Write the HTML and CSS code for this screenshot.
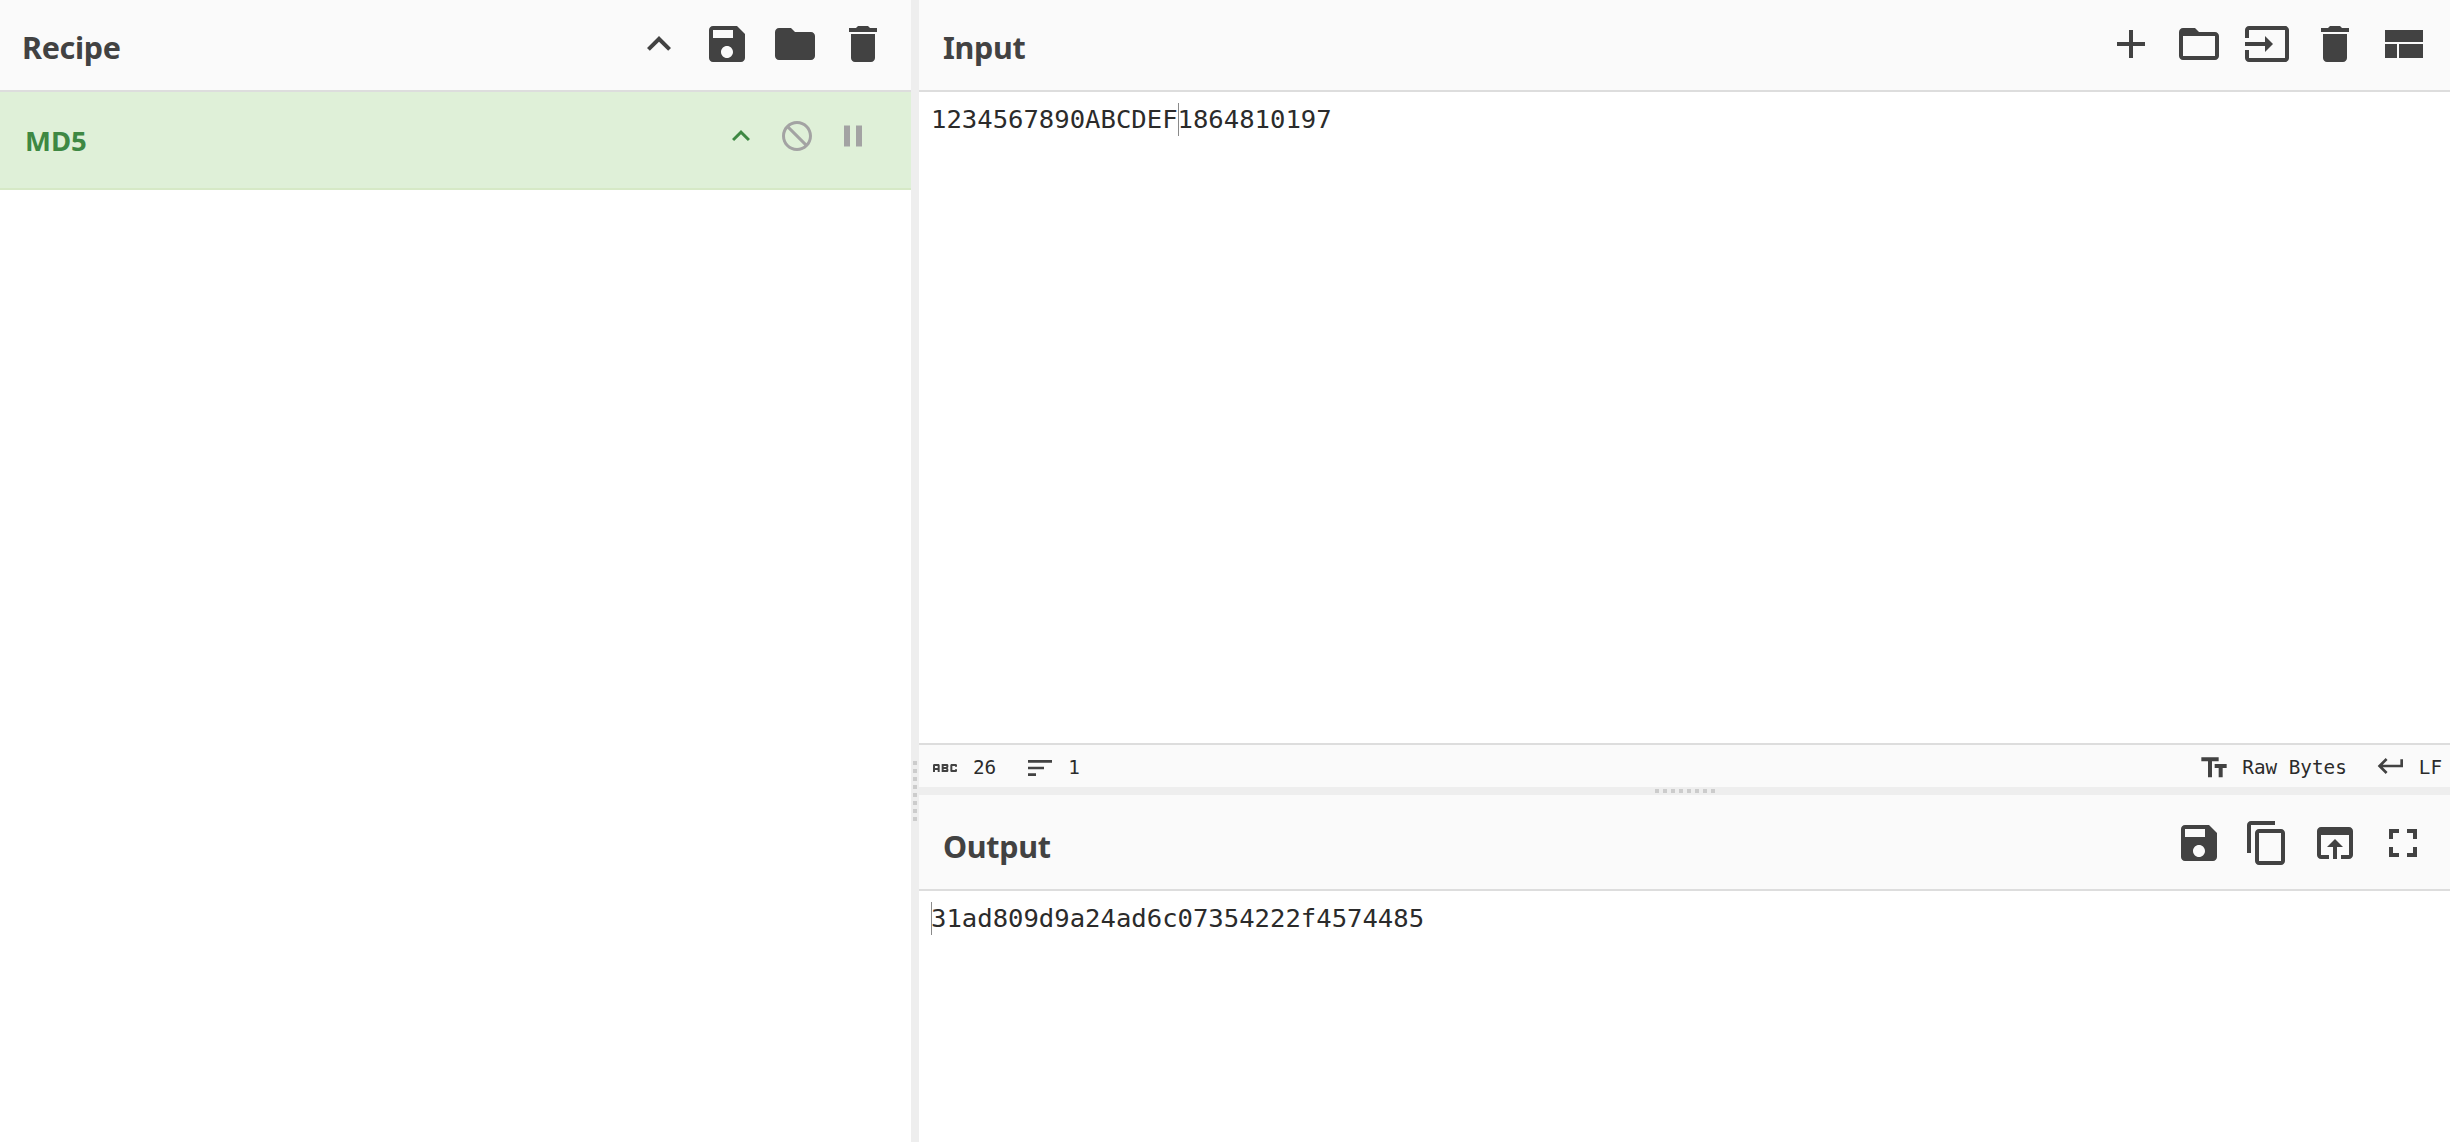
FILE: index.html
```html
<!DOCTYPE html>
<html lang="en">
<head>
<meta charset="utf-8">
<title>CyberChef</title>
<link rel="stylesheet" href="styles.css">
</head>
<body>
<div class="app">
  <section class="recipe">
    <header class="bar bar-recipe">
      <h1 class="title">Recipe</h1>
      <div class="tools">
        <svg class="ico" viewBox="0 0 24 24"><path d="M7.41 15.41L12 10.83l4.59 4.58L18 14l-6-6-6 6z"/></svg>
        <svg class="ico" viewBox="0 0 24 24"><path d="M17 3H5c-1.11 0-2 .9-2 2v14c0 1.1.89 2 2 2h14c1.1 0 2-.9 2-2V7l-4-4zm-5 16c-1.66 0-3-1.34-3-3s1.34-3 3-3 3 1.34 3 3-1.34 3-3 3zm3-10H5V5h10v4z"/></svg>
        <svg class="ico" viewBox="0 0 24 24"><path d="M10 4H4c-1.1 0-1.99.9-1.99 2L2 18c0 1.1.9 2 2 2h16c1.1 0 2-.9 2-2V8c0-1.1-.9-2-2-2h-8l-2-2z"/></svg>
        <svg class="ico" viewBox="0 0 24 24"><path d="M6 19c0 1.1.9 2 2 2h8c1.1 0 2-.9 2-2V7H6v12zM19 4h-3.5l-1-1h-5l-1 1H5v2h14V4z"/></svg>
      </div>
    </header>
    <div class="op">
      <span class="op-name">MD5</span>
      <div class="op-tools">
        <svg class="ico-sm ico-green" viewBox="0 0 24 24"><path d="M7.41 15.41L12 10.83l4.59 4.58L18 14l-6-6-6 6z"/></svg>
        <svg class="ico-sm ico-grey" viewBox="0 0 24 24"><path d="M12 2C6.48 2 2 6.48 2 12s4.48 10 10 10 10-4.48 10-10S17.52 2 12 2zm0 18c-4.42 0-8-3.58-8-8 0-1.85.63-3.55 1.69-4.9L16.9 18.31C15.55 19.37 13.85 20 12 20zm6.31-3.1L7.1 5.69C8.45 4.63 10.15 4 12 4c4.42 0 8 3.58 8 8 0 1.85-.63 3.55-1.69 4.9z"/></svg>
        <svg class="ico-sm ico-grey" viewBox="0 0 24 24"><path d="M6 19h4V5H6v14zm8-14v14h4V5h-4z"/></svg>
      </div>
    </div>
  </section>
  <div class="gutter-v"><div class="dots-v"></div></div>
  <section class="io">
    <header class="bar">
      <h1 class="title">Input</h1>
      <div class="tools">
        <svg class="ico" viewBox="0 0 24 24"><path d="M19 13h-6v6h-2v-6H5v-2h6V5h2v6h6v2z"/></svg>
        <svg class="ico" viewBox="0 0 24 24"><path d="M20 6h-8l-2-2H4c-1.1 0-1.99.9-1.99 2L2 18c0 1.1.9 2 2 2h16c1.1 0 2-.9 2-2V8c0-1.1-.9-2-2-2zm0 12H4V8h16v10z"/></svg>
        <svg class="ico" viewBox="0 0 24 24"><path d="M21 3.01H3c-1.1 0-2 .9-2 2V9h2V4.99h18v14.03H3V15H1v4.01c0 1.1.9 1.98 2 1.98h18c1.1 0 2-.88 2-1.98v-14c0-1.11-.9-2-2-2zM11 16l4-4-4-4v3H1v2h10v3z"/></svg>
        <svg class="ico" viewBox="0 0 24 24"><path d="M6 19c0 1.1.9 2 2 2h8c1.1 0 2-.9 2-2V7H6v12zM19 4h-3.5l-1-1h-5l-1 1H5v2h14V4z"/></svg>
        <svg class="ico" viewBox="0 0 24 24"><path d="M3 19h6v-7H3v7zm7 0h12v-7H10v7zM3 5v6h19V5H3z"/></svg>
      </div>
    </header>
    <div class="text text-input">1234567890ABCDEF<span class="caret"></span>1864810197</div>
    <footer class="status">
      <div class="status-group">
        <svg class="ico-st" viewBox="0 0 24 24"><path d="M21 11h-1.5v-.5h-2v3h2V13H21v1c0 .55-.45 1-1 1h-3c-.55 0-1-.45-1-1v-4c0-.55.45-1 1-1h3c.55 0 1 .45 1 1v1zM8 10v5H6.5v-1.5h-2V15H3v-5c0-.55.45-1 1-1h3c.55 0 1 .45 1 1zm-1.5.5h-2V12h2v-1.5zm7 1.5c.55 0 1 .45 1 1v1c0 .55-.45 1-1 1h-4V9h4c.55 0 1 .45 1 1v1c0 .55-.45 1-1 1zM11 10.5v.75h2v-.75h-2zm2 3v-.75h-2v.75h2z"/></svg>
        <span class="st-text">26</span>
        <svg class="ico-st st-next" viewBox="0 0 24 24"><path d="M3 18h6v-2H3v2zM3 6v2h18V6H3zm0 7h12v-2H3v2z"/></svg>
        <span class="st-text">1</span>
      </div>
      <div class="status-group">
        <svg class="ico-st" viewBox="0 0 24 24"><path d="M2.5 4v3h5v12h3V7h5V4h-13zm19 5h-9v3h3v7h3v-7h3V9z"/></svg>
        <span class="st-text">Raw Bytes</span>
        <svg class="ico-st st-next st-return" viewBox="0 0 24 24"><path d="M19 7v4H5.83l3.58-3.59L8 6l-6 6 6 6 1.41-1.41L5.83 13H21V7z"/></svg>
        <span class="st-text">LF</span>
      </div>
    </footer>
    <div class="gutter-h"><div class="dots-h"></div></div>
    <header class="bar bar-output">
      <h1 class="title">Output</h1>
      <div class="tools">
        <svg class="ico" viewBox="0 0 24 24"><path d="M17 3H5c-1.11 0-2 .9-2 2v14c0 1.1.89 2 2 2h14c1.1 0 2-.9 2-2V7l-4-4zm-5 16c-1.66 0-3-1.34-3-3s1.34-3 3-3 3 1.34 3 3-1.34 3-3 3zm3-10H5V5h10v4z"/></svg>
        <svg class="ico" viewBox="0 0 24 24"><path d="M16 1H4c-1.1 0-2 .9-2 2v14h2V3h12V1zm3 4H8c-1.1 0-2 .9-2 2v14c0 1.1.9 2 2 2h11c1.1 0 2-.9 2-2V7c0-1.1-.9-2-2-2zm0 16H8V7h11v14z"/></svg>
        <svg class="ico" viewBox="0 0 24 24"><path d="M19 4H5c-1.11 0-2 .9-2 2v12c0 1.1.89 2 2 2h4v-2H5V8h14v10h-4v2h4c1.1 0 2-.9 2-2V6c0-1.1-.9-2-2-2zm-7 6l-4 4h3v6h2v-6h3l-4-4z"/></svg>
        <svg class="ico" viewBox="0 0 24 24"><path d="M7 14H5v5h5v-2H7v-3zm-2-4h2V7h3V5H5v5zm12 7h-3v2h5v-5h-2v3zM14 5v2h3v3h2V5h-5z"/></svg>
      </div>
    </header>
    <div class="text text-output"><span class="caret"></span>31ad809d9a24ad6c07354222f4574485</div>
  </section>
</div>
</body>
</html>
```

FILE: styles.css
```css
* { box-sizing: border-box; }
html, body { margin: 0; height: 100%; background: #fff; overflow: hidden; }
.app {
  display: grid;
  grid-template-columns: 911px 8px 1fr;
  height: 1142px;
  color: #424242;
  font-family: "Noto Sans", "Open Sans", sans-serif;
}
.recipe, .io { display: flex; flex-direction: column; min-width: 0; }
.bar {
  display: flex;
  align-items: center;
  justify-content: space-between;
  flex: none;
  height: 92px;
  padding: 0 23px 2px 24px;
  background: #fafafa;
  border-bottom: 2px solid #ddd;
}
.bar-recipe { padding-left: 22px; padding-right: 24px; }
.bar-output { height: 96px; padding-top: 2px; padding-bottom: 0; }
.title { margin: 5px 0 0; font-size: 30.5px; line-height: 40px; font-weight: 700; color: #424242; letter-spacing: -0.3px; }
.tools { display: flex; gap: 20px; }
.ico { display: block; width: 48px; height: 48px; fill: #424242; }
.op {
  display: flex;
  justify-content: space-between;
  flex: none;
  height: 98px;
  padding: 26px 40px 0 25px;
  background: #dff0d8;
  border-bottom: 2px solid #d6e9c6;
}
.op-name { margin-top: 1px; font-size: 27.5px; line-height: 44px; font-weight: 700; color: #3e8843; }
.op-tools { display: flex; gap: 20px; }
.ico-sm { display: block; width: 36px; height: 36px; }
.ico-green { fill: #3e8843; }
.ico-grey { fill: #a3a3a3; }
.gutter-v { background: #eee; padding-top: 761px; display: flex; justify-content: center; }
.dots-v {
  width: 4px;
  height: 60px;
  background: repeating-linear-gradient(to bottom, #ccc 0 4px, transparent 4px 8px);
}
.text {
  padding: 11px 12px;
  font-family: "DejaVu Sans Mono", monospace;
  font-size: 25.6px;
  line-height: 33px;
  color: #2b2b2b;
  white-space: pre;
}
.text-input { flex: none; height: 651px; }
.text-output { flex: 1; min-height: 0; }
.caret { position: relative; display: inline-block; width: 0; height: 33px; vertical-align: top; }
.caret::after {
  content: "";
  position: absolute;
  left: 0;
  top: 0;
  width: 1px;
  height: 33px;
  background: #8a8a8a;
}
.status {
  display: flex;
  justify-content: space-between;
  align-items: center;
  flex: none;
  height: 44px;
  padding: 4px 8px 0 10px;
  background: #fafafa;
  border-top: 2px solid #ddd;
}
.status-group { display: flex; align-items: center; gap: 12px; }
.ico-st { display: block; width: 32px; height: 32px; fill: #424242; }
.st-next { margin-left: 16px; }
.st-return { margin-bottom: 4px; }
.st-text { font-family: "DejaVu Sans Mono", monospace; font-size: 19.3px; line-height: 24px; color: #2b2b2b; }
.gutter-h { flex: none; display: flex; justify-content: center; align-items: center; height: 8px; background: #eee; }
.dots-h {
  width: 60px;
  height: 4px;
  background: repeating-linear-gradient(to right, #ccc 0 4px, transparent 4px 8px);
}
```
